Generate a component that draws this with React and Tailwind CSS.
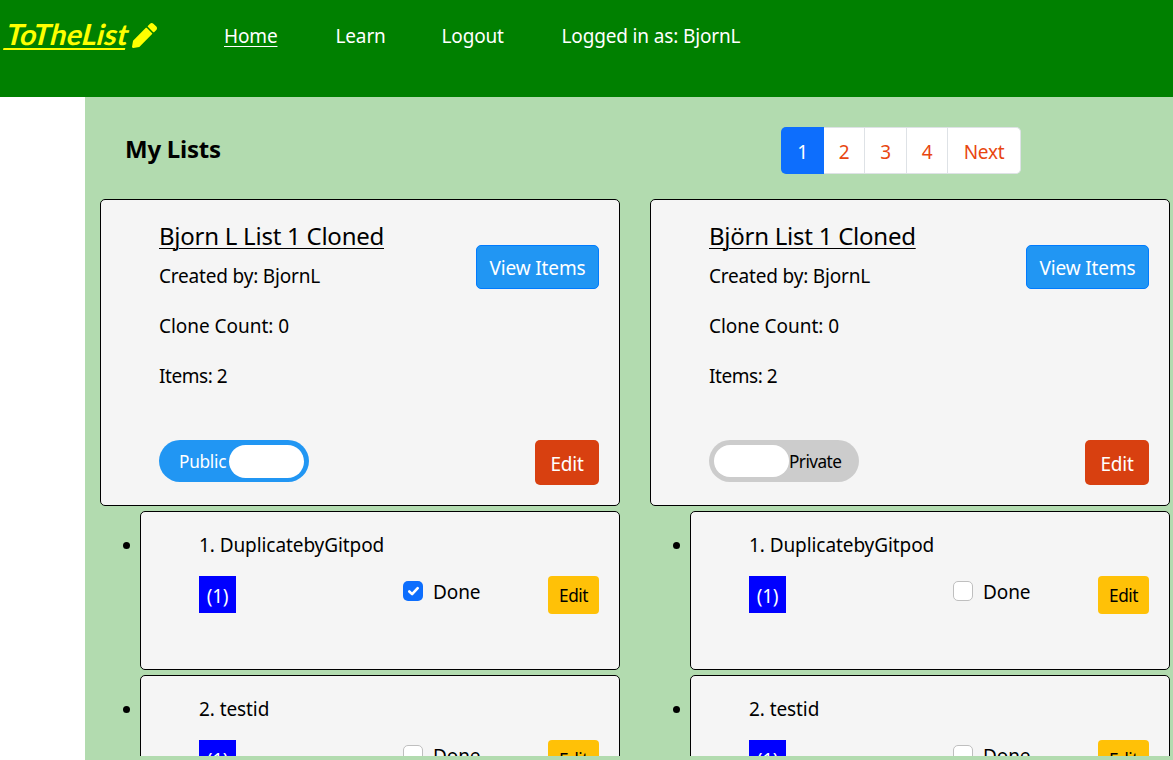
import React from "react";

const lists = [
  {
    title: "Bjorn L List 1 Cloned",
    isPublic: true,
    items: [
      { name: "1. DuplicatebyGitpod", done: true },
      { name: "2. testid", done: false },
    ],
  },
  {
    title: "Björn List 1 Cloned",
    isPublic: false,
    items: [
      { name: "1. DuplicatebyGitpod", done: false },
      { name: "2. testid", done: false },
    ],
  },
];

function Pencil() {
  return (
    <svg viewBox="0 0 512 512" className="ml-[6px] mt-[23px] h-[25px] w-[25px] fill-[#ffff00]">
      <path d="M497.9 142.1l-46.1 46.1c-4.7 4.7-12.3 4.7-17 0l-111-111c-4.7-4.7-4.7-12.3 0-17l46.1-46.1c18.7-18.7 49.1-18.7 67.9 0l60.1 60.1c18.8 18.7 18.8 49.1 0 68zM284.2 99.8L21.6 362.4.4 483.9c-2.9 16.4 11.4 30.6 27.8 27.8l121.5-21.3 262.6-262.6c4.7-4.7 4.7-12.3 0-17l-111-111c-4.8-4.7-12.4-4.7-17.1 0z" />
    </svg>
  );
}

function Navbar() {
  return (
    <header className="flex h-[97px] shrink-0 bg-[#008000] text-white">
      <a className="ml-1 flex w-[220px] shrink-0 items-start">
        <span className="mt-[16px] w-[122px] origin-[0_30px] -skew-x-[14deg] whitespace-nowrap font-[Lato,Carlito,sans-serif] text-[29px] font-bold leading-[36px] tracking-[0.02px] text-[#ffff00] underline decoration-2 underline-offset-[3px]">
          ToTheList
        </span>
        <Pencil />
      </a>
      <nav className="mt-[21px] flex whitespace-nowrap leading-[30px] tracking-[-0.15px]">
        <a className="w-[111.5px] underline decoration-1 underline-offset-[3px]">Home</a>
        <a className="w-[106px]">Learn</a>
        <a className="w-[120px]">Logout</a>
        <span>Logged in as: BjornL</span>
      </nav>
    </header>
  );
}

function Pagination() {
  return (
    <div className="flex h-[47px] w-[240px] text-center leading-[49px] text-[#e84610]">
      <span className="w-[43px] rounded-l-[5px] bg-[#0d6efd] pt-px text-white">1</span>
      <span className="w-[41px] border-y border-r border-[#dee2e6] bg-white">2</span>
      <span className="w-[42px] border-y border-r border-[#dee2e6] bg-white">3</span>
      <span className="w-[41px] border-y border-r border-[#dee2e6] bg-white">4</span>
      <span className="flex-1 rounded-r-[5px] border-y border-r border-[#dee2e6] bg-white">Next</span>
    </div>
  );
}

function Toggle({ on }) {
  return on ? (
    <div className="flex h-[42px] w-[150px] items-start rounded-full bg-[#2196f3] pl-5 pt-[5px] text-[17.2px] text-white">
      <span className="w-[50px] leading-[33px]">Public</span>
      <span className="h-[33px] w-[75px] rounded-full bg-white" />
    </div>
  ) : (
    <div className="flex h-[42px] w-[150px] items-start rounded-full bg-[#ccc] pl-[5px] pt-[5px] text-[17.2px] tracking-[-0.55px]">
      <span className="h-[32px] w-[75px] rounded-full bg-white" />
      <span className="leading-[33px]">Private</span>
    </div>
  );
}

function ListCard({ list }) {
  return (
    <section className="flex h-[307px] justify-between rounded-[5px] border border-black bg-[#f5f5f5] pl-[58px] pr-5">
      <div className="pt-[21px]">
        <h2 className="whitespace-nowrap text-[24px] leading-[30px] tracking-[-0.25px] underline decoration-1 underline-offset-[3px]">
          {list.title}
        </h2>
        <p className="mt-[10px] leading-[30px] tracking-[-0.19px]">Created by: BjornL</p>
        <p className="mt-5 leading-[30px] tracking-[-0.04px]">Clone Count: 0</p>
        <p className="mt-5 leading-[30px] tracking-[-0.45px]">Items: 2</p>
        <div className="mt-[49px]">
          <Toggle on={list.isPublic} />
        </div>
      </div>
      <div className="flex flex-col items-end pt-[45px] text-white">
        <button className="h-11 w-[123px] whitespace-nowrap rounded-[5px] border border-[#007bff] bg-[#2196f3] pt-[2px] tracking-[-0.15px]">View Items</button>
        <button className="mt-[151px] h-[45px] w-16 rounded-[5px] bg-[#d84010] pt-[3px]">Edit</button>
      </div>
    </section>
  );
}

function Checkbox({ checked }) {
  return checked ? (
    <span className="mt-[5px] h-5 w-5 rounded-[5px] bg-[#0d6efd]">
      <svg viewBox="0 0 20 20" className="h-5 w-5">
        <path d="m6.3 10.5 2.8 2.6 5.6-6" fill="none" stroke="#fff" strokeWidth="2.6" strokeLinecap="round" strokeLinejoin="round" />
      </svg>
    </span>
  ) : (
    <span className="mt-[5px] h-5 w-5 rounded-[5px] border border-[#bfbfbf] bg-white" />
  );
}

function Item({ item }) {
  return (
    <li className="flex">
      <span className="ml-[22.8px] mt-[31.3px] h-[7.2px] w-[7.2px] shrink-0 rounded-full bg-black" />
      <div className="ml-[10px] h-[159px] flex-1 rounded-[5px] border border-black bg-[#f5f5f5] pl-[58px] pr-5 pt-[18px]">
        <p className="leading-[30px] tracking-[-0.08px]">{item.name}</p>
        <div className="mt-[16px] flex items-start">
          <span className="h-[37px] w-[37px] bg-[#0000ff] text-center leading-[40px] text-white">(1)</span>
          <span className="ml-[167px] flex gap-[10px]">
            <Checkbox checked={item.done} />
            <span className="mt-px leading-[30px] tracking-[-0.1px]">Done</span>
          </span>
          <button className="ml-auto h-[38px] w-[51px] rounded-[4px] bg-[#ffc107] pt-px text-[17.2px] tracking-[-0.5px]">Edit</button>
        </div>
      </div>
    </li>
  );
}

export default function App() {
  return (
    <div className="flex h-[760px] w-full flex-col overflow-hidden bg-white font-['Noto_Sans',sans-serif] text-[19px] tracking-[-0.25px] text-black">
      <Navbar />
      <main className="ml-[85px] flex-1 overflow-hidden bg-[#b2dbaf] pb-1">
        <div className="h-[659px] overflow-hidden">
          <div className="flex h-[102px] items-start pl-10 pt-[30px]">
            <h1 className="mt-[7px] w-[656px] text-[24px] font-bold leading-[30px] tracking-[-0.25px]">My Lists</h1>
            <Pagination />
          </div>
          <div className="flex w-[1100px]">
            {lists.map((list) => (
              <div key={list.title} className="w-[550px] px-[15px]">
                <ListCard list={list} />
                <ul className="mt-[5px] flex flex-col gap-[5px]">
                  {list.items.map((item) => (
                    <Item key={item.name} item={item} />
                  ))}
                </ul>
              </div>
            ))}
          </div>
        </div>
      </main>
    </div>
  );
}
